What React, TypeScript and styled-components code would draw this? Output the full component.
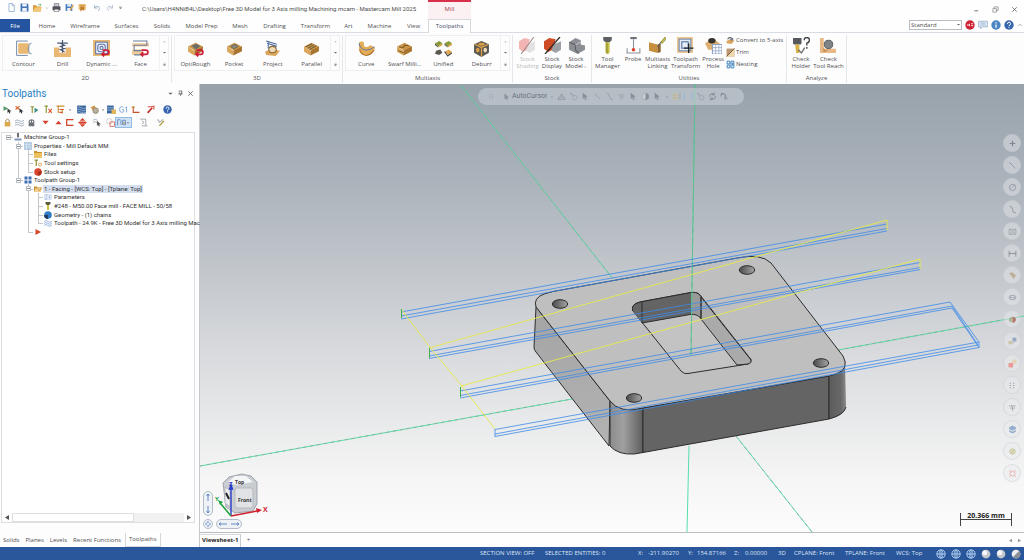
import React from "react";
import styled, { createGlobalStyle } from "styled-components";

const GlobalStyle = createGlobalStyle`
  *, *::before, *::after { box-sizing: border-box; }
  body { margin: 0; background: #fdfdfe; }
  button, select { font: inherit; color: inherit; }
  button { background: none; border: 0; padding: 0; margin: 0; }
  svg { display: block; flex: none; }
`;

const UI = `"Open Sans", "Noto Sans", sans-serif`;
const NARROW = `Roboto, "Liberation Sans", sans-serif`;

/* ---------- icons ---------- */

const tan = "#e9b872";
const block = (
  <>
    <path d="M1 6 8 2.500l7 3.500-5.500 5z" fill="#c9964c" />
    <path d="M1 6v5l6 3.500V10z" fill="#d9a65a" />
    <path d="M7 10v4.500l8-4V6z" fill="#a87430" />
  </>
);
const redLoop = (
  <path d="M9 9.500h4a2 2 0 0 1 0 4H9M10.500 11.500 8.500 13.500l2 2" fill="none" stroke="#cf1f36" strokeWidth="1.6" />
);

const art: Record<string, React.ReactNode> = {
  contour: <><rect x="3" y="3" width="10" height="10" rx="1" fill={tan} /><path d="M12 1H1.500v13.500H12M15.500 3q-3 .5-2.500 3t-1 2q1.500 0 1 2.500t2.500 2.500" fill="none" stroke="#7286a8" strokeWidth=".9" /></>,
  drill: <><path d="M0 7h5v5h6V7h5v9H0z" fill={tan} /><path d="M8 0v12M6 3l4 2-4 1 4 2-4 1 4 2M3 3h10" fill="none" stroke="#4c5a72" strokeWidth="1.1" /></>,
  dynamic: <><rect width="16" height="15" fill={tan} /><rect x="2.500" y="2" width="11" height="11" fill="#eef2fa" stroke="#5d77a8" /><rect x="4.500" y="4" width="7" height="7" rx="2" fill="none" stroke="#5d77a8" /><circle cx="8" cy="7.500" r="1.500" fill="none" stroke="#5d77a8" />{redLoop}</>,
  face: <><path d="M0 3h16v3H0zM0 9h10v5H0z" fill="#f0cd98" /><path d="M1 1h13v4H2v5h7M2 14h7" fill="none" stroke="#6b7d9b" />{redLoop}</>,
  optirough: <>{block}<path d="M5 5.500 9 4l3 2-4 2.500z" fill="#6f6c62" stroke="#4a6a86" strokeWidth=".6" />{redLoop}</>,
  pocket: <>{block}<path d="M4.500 6 8.500 4l3 2-4 2.500z" fill="#8a877c" stroke="#55534c" strokeWidth=".6" /></>,
  project: <><path d="m1 11 5-2.500 9 1.500-4 5-9-1z" fill="#d9a65a" /><path d="M2 1 12 4M3 3l9 3" stroke="#49699c" /><ellipse cx="8" cy="9" rx="3.500" ry="3" fill="#f0dcb8" stroke="#8b6a35" /><path d="M4 2v6" stroke="#49699c" /></>,
  parallel: <>{block}<path d="m2.500 6.500 6-3M4.500 7.800l6-3.300M6 9l6.500-3.500" stroke="#5a4a2c" strokeWidth=".8" /></>,
  curve: <><path d="M1 2.500q0-1 2.500-1t2 2.500q0 3 3 2.500 2-.5 3-1.500l4 1.500v3q-3 5-8 5-6 0-6.500-6z" fill="#e6ac55" /><path d="M1 3q1 6 6.500 6.500Q12 9.500 15.500 6.500" fill="none" stroke="#5b75a4" strokeWidth=".9" /><path d="M1.500 9q1.500 5 6.500 5.500 4-.5 7-5" fill="none" stroke="#a87430" /></>,
  swarf: <>{block}<path d="M3 6.500 7 7l1-2 4 .5M2 10l5 2" fill="none" stroke="#7c5a22" /></>,
  unified: <><path d="m0 3 4-2 3 2-4 3zM9 3l4-2 3 2-4 3z" fill="#8a9a38" /><path d="M0 3v2l3 2V6zM9 3v2l3 2V6zM1 10l4-1 2 3-3 2-4-1z" fill="#5d5a52" /><path d="m3 6 4-3v2L3 7zM12 6l4-3v2l-4 2zM9 11l4-2 3 2-3 3z" fill="#e0a850" /><path d="m9 11 3 4 4-3" fill="none" stroke="#474747" /></>,
  deburr: <><path d="m1 4 7-3 7 3v8l-7 4-7-4z" fill="#5a5852" /><path d="m1.500 4 6.500 3 6.500-3M8 7v8.500" fill="none" stroke="#dba047" strokeWidth="1.200" /><ellipse cx="8" cy="4" rx="3" ry="1.300" fill="#dba047" /><ellipse cx="4.500" cy="9.500" rx="1.700" ry="2.200" fill="#dba047" /><ellipse cx="11.500" cy="9.500" rx="1.700" ry="2.200" fill="#f0dcb8" /></>,
  shading: <><path d="m0 4 5-3 5 1-2 10-4 2-4-3z" fill="#f3b5b3" /><path d="m9 6 6-2v8l-5 3-3-2z" fill="#e2e2e2" /><path d="M14 0 2 16" stroke="#a08888" /></>,
  display: <><path d="m0 4 5-3 6 1-3 10-4 2-4-3z" fill="#cf4b25" /><path d="m9 7 7-3v8l-5 3-4-2z" fill="#9ba0a6" /><path d="M15 0 1 16" stroke="#2c2c2c" strokeWidth="1.200" /></>,
  model: <><path d="m1 5 6-4 5 2v4l4 1v4l-7 4-8-4z" fill="#8b8f94" /><path d="m1 5 6 2.500V12l3 3.500" fill="none" stroke="#5e6266" /><path d="m7 7.500 5-3" stroke="#b9bcc0" /></>,
  tool: <><path d="M4 0h8v3L10 5H6L4 3z" fill="#5c6065" /><path d="M6 5h4v9l-1 2H7l-1-2z" fill="#c6c04a" /><path d="M7 5h1v10H7z" fill="#8c8733" /></>,
  probe: <><path d="M5 0h6v2H5z" fill="#6d7178" /><path d="M8 2v9M2 10.500V15h12v-4.500" fill="none" stroke="#8a9098" /><circle cx="8" cy="12" r="1.700" fill="#d8432a" /></>,
  linking: <><path d="m0 5 8 2v8L0 13z" fill="#c68e3e" /><path d="m8 7 3-1v8l-3 1z" fill="#8a6128" /><path d="m8 9 4-5" stroke="#5c6065" /><path d="m11 5 4-5 1 2-3.500 4z" fill="#c9c250" stroke="#7b7629" strokeWidth=".6" /></>,
  transform: <><rect width="15" height="15" fill="#edc58c" /><rect x="2" y="2" width="11" height="11" fill="#e6edf7" stroke="#6d89b3" /><rect x="4.500" y="4.500" width="6" height="6" fill="none" stroke="#4c6fa3" /><path d="M11 6v9M6.500 10.500h9" stroke="#242424" strokeWidth="1.300" /></>,
  hole: <><path d="m0 6 7-5 7 5-5 6H3z" fill="#ddb072" /><ellipse cx="6.500" cy="3.500" rx="3.500" ry="2.500" fill="#36332c" /><path d="M7 7h9v9H7z" fill="#fff" stroke="#8ba0c4" /><path d="M7 10h9M7 13h9M10 7v9M13 7v9" stroke="#8ba0c4" strokeWidth=".7" /></>,
  holder: <><path d="M0 1h8v5L7 7H1L0 6z" fill="#55585c" /><path d="M2 7h4v8H3z" fill="#d8b145" /><path d="m5 12 3 3 3-5" fill="none" stroke="#6c6f73" strokeWidth="1.200" /><path d="M10.500 3q0-2.500 2.500-2.500t2.500 2.300-2.500 3V8M13 9.500v1.500" fill="none" stroke="#3f4245" strokeWidth="1.300" /></>,
  reach: <><path d="M0 1h3.500v10H15v4H0z" fill="#e8b987" /><path d="M3 9q1 4 5 3l-3 2H3z" fill="#c99458" /><circle cx="8" cy="7" r="4" fill="#7f8387" stroke="#5e6266" /></>,
  convert: <><path d="m1 9 6-3 8 2-5 6-9-1z" fill="#dba65b" /><path d="M3 6q1-4 6-3l4 3" fill="none" stroke="#5d6570" strokeWidth="2" /><circle cx="10" cy="6" r="2.500" fill="#75808c" /></>,
  trim: <><rect x="1" y="1" width="14" height="14" fill="#b99773" /><path d="M1 15 15 1v14z" fill="#efd7ae" /><path d="M1 15 15 1" stroke="#6a4a2b" strokeWidth="1.500" /></>,
  nesting: <><path d="M2 2h5v5H2zM9 2h5v12H9zM2 9h5v5H2z" fill="#eaf3fb" stroke="#2e77b5" strokeWidth="1.500" /><path d="M11 5h2v5h-2z" fill="#2e77b5" /></>,
  newdoc: <path d="M3.500 1h6l3.500 3.500V15h-9.500zM9.500 1v4H13" fill="#fff" stroke="#7da0cc" strokeWidth="1.300" />,
  save: <><path d="M1 1h12l2 2v12H1z" fill="#3f73b5" /><path d="M4 1h8v5H4zM4 9h8v6H4z" fill="#eef3fa" /></>,
  open: <><path d="M0 4h6l1 2h7v9H0z" fill="#d79a3c" /><path d="m3 8 13-1-3 8H0z" fill="#f1c878" /><path d="M9 3h5M12 1l2.500 2L12 5" stroke="#3a9a56" fill="none" /></>,
  print: <><path d="M4 1h8v5H4z" fill="#cfd4da" stroke="#555" /><path d="M1 6h14v7H1z" fill="#4d5258" /><path d="M4 11h8v4H4z" fill="#fff" stroke="#4d5258" /></>,
  saveas: <><path d="M1 2h12v12H1z" fill="#4a7cbc" /><path d="M4 2h7v4H4zM4 9h6v5H4z" fill="#eef3fa" /><path d="m8 12 6-9 2 1.500L10 13z" fill="#e8a43c" /></>,
  zip: <><path d="M1 2h13v10H1z" fill="#efbf72" /><path d="M4 6h7v8l-3-2-4 3z" fill="#c07f2d" /><path d="M3 4h9" stroke="#b37426" /></>,
  undo: <path d="M3 2v6h6M3 8q3-5 8-3 4 3 0 9" fill="none" stroke="#8fa1ba" strokeWidth="1.500" />,
  redo: <path d="M13 2v6H7M13 8q-3-5-8-3-4 3 0 9" fill="none" stroke="#a9b8cb" strokeWidth="1.500" />,
  red: <><circle cx="8" cy="8" r="7.500" fill="#cc2233" /><path d="M3 8h3M7 6v4M10 6h3M10 9h3" stroke="#fff" strokeWidth="1.500" /></>,
  chat: <><path d="M1 2h14v9H7l-3 3v-3H1z" fill="#e2ebf5" stroke="#7f9dc2" /><path d="M4 5h8M4 8h8" stroke="#7f9dc2" /></>,
  info: <><circle cx="8" cy="8" r="7.500" fill="#4a86c2" /><path d="M8 3.500v2M8 7v5.500" stroke="#fff" strokeWidth="2" /></>,
  help: <><circle cx="8" cy="8" r="7.500" fill="#3765ad" /><path d="M5.500 6.500q0-3 2.500-3t2.500 2.300T8 9v1M8 11.500v1.500" fill="none" stroke="#fff" strokeWidth="1.600" /></>,
  selAll: <><path d="m1 2 8 4-8 4z" fill="#4f9a63" /><path d="m8 6 7 5-3 .5 1 3-2 .5-1-3-2 2z" fill="#333" /></>,
  selNone: <><path d="m1 2 7 6M8 2 1 8" stroke="#d9682c" strokeWidth="2.200" /><path d="m8 6 7 5-3 .5 1 3-2 .5-1-3-2 2z" fill="#333" /></>,
  regen: <><path d="M1 3h6M4 3v11" stroke="#8a9431" strokeWidth="2" /><path d="m8 5 7 4-7 5z" fill="#3a8f7d" /></>,
  regenX: <><path d="M1 2h6M4 2v12" stroke="#8a9431" strokeWidth="2" /><path d="m8 7 6 7M14 7l-6 7" stroke="#d9582c" strokeWidth="2" /></>,
  regenAll: <><path d="M1 2h14M4 2v12M11 7v8" stroke="#c99031" strokeWidth="2" /><path d="M6 8h8M6 13h6" stroke="#d9582c" strokeWidth="2" /></>,
  backplot: <><path d="M0 1h16v14H0z" fill="#3a659e" /><path d="M0 5q4-3 8 0t8 0M0 9q4-3 8 0t8 0M0 13q4-3 8 0t8 0" stroke="#cfe0f5" fill="none" /></>,
  verify: <><path d="m1 4 7-3 3 5-5 4z" fill="#d59a45" /><circle cx="10" cy="10" r="5" fill="#b9b19d" stroke="#786c52" /></>,
  post: <><path d="M0 1h12v14H0z" fill="#3a659e" /><path d="M0 5h12M0 9h12" stroke="#d6e4f5" /><path d="M8 8h8v8H8z" fill="#e2b35d" /></>,
  g1: <path d="M8 4.500q-1-1.500-3.500-1.500Q1 3 1 8t4 5q3 0 3.500-1.500V8.500H5M11 5.500 13.500 3v10" fill="none" stroke="#6b98cd" strokeWidth="1.400" />,
  feed: <><path d="M4 2v11h11" fill="none" stroke="#c4522f" strokeWidth="2" /><path d="M1 4h6" stroke="#c99031" strokeWidth="2" /></>,
  wand: <><path d="m3 14 8-9" stroke="#c22f2a" strokeWidth="3" /><path d="M3 3h6l5-1v6" fill="none" stroke="#d95448" strokeWidth="2" /></>,
  lock: <><path d="M3 7h10v8H3z" fill="#d9a94c" /><path d="M5 7V4q3-4 6 0v3" fill="none" stroke="#98763a" strokeWidth="1.500" /></>,
  tilde: <path d="M0 5q4-3 8 0t8-1M0 9q4-3 8 0t8-1M0 13q4-3 8 0t8-1" fill="none" stroke="#8e9bab" strokeWidth="1.300" />,
  ghost: <><path d="M3 15V5q1-3 5-3t5 3v10l-2-1-1.500 1L8 14l-1.500 1L5 14z" fill="#6e7276" /><path d="M5 5h2v3H5zM9 5h2v3H9z" fill="#fff" /></>,
  down: <path d="M1 4h14l-7 8z" fill="#d6402b" />,
  up: <path d="M1 12h14L8 4z" fill="#d6402b" />,
  bracket: <path d="M15 3H3v10h12" fill="none" stroke="#d6402b" strokeWidth="2.200" />,
  updown: <path d="m8 0 5 5H3zM8 16l5-5H3zM0 8l3-2h10l3 2-3 2H3z" fill="#d6402b" />,
  cursorW: <><path d="M0 4q4-3 8 0M0 8q4-3 7 0" fill="none" stroke="#8e9bab" strokeWidth="1.300" /><path d="m7 5 7 6-3 .5 1 3-2 .5-1-3-2 2z" fill="#555" /></>,
  shapes: <><circle cx="6" cy="6" r="5" fill="none" stroke="#b9b0ae" /><path d="M7 7h8v8H7z" fill="none" stroke="#d9705f" strokeWidth="1.600" /></>,
  boxed: <><path d="M1 3v10M1 3h5M7 4v8M10 4h5v8h-5z" fill="none" stroke="#5f86b5" strokeWidth="1.500" /><path d="M11.500 7h2v3h-2z" fill="#c77a3a" /></>,
  sheet: <path d="M2 2h10v12H5M12 14h3M5 5l4 3-4 3" fill="none" stroke="#9a9ea4" strokeWidth="1.500" />,
  edit: <><path d="M2 3q4 0 4 5l7-6" fill="none" stroke="#8a8e94" strokeWidth="1.500" /><path d="m6 14 8-9" stroke="#b1a04a" strokeWidth="2.500" /></>,
  machine: <><path d="M6 0h4v7l-2 3-2-3z" fill="#6a7077" /><path d="M1 11h14v4H1z" fill="#7e97b8" /></>,
  props: <><path d="M1 1h14v14H1z" fill="#b9cfe6" stroke="#8aa9cc" /><path d="M5 1v14M1 5h14M1 10h14" stroke="#dfeaf5" /></>,
  folder: <><path d="M0 2h6l1 2h9v11H0z" fill="#c9922d" /><path d="M0 6h16v9H0z" fill="#edc25e" /></>,
  settings: <><path d="M1 2h7M4.500 2v12" stroke="#98913a" strokeWidth="2.500" /><circle cx="12" cy="11" r="3" fill="none" stroke="#d08f3b" strokeWidth="1.600" /></>,
  stock: <><circle cx="8" cy="8" r="7.500" fill="#d8452a" /><path d="M8 8v7.500A7.500 7.500 0 0 0 15 6z" fill="#a8301a" /></>,
  group: <path d="M1 1h6v6H1zM9 1h6v6H9zM1 9h6v6H1zM9 9h6v6H9z" fill="#3b6cb3" />,
  opened: <><path d="M0 3h6l1 2h6v9H0z" fill="#c9922d" /><path d="m3 7 13-1-3 8H0z" fill="#f2d394" /><path d="m8 9 3 3 4-8" fill="none" stroke="#c7852c" strokeWidth="1.500" /></>,
  params: <path d="M0 4h16M0 8h16M0 12h16M5 2v4M11 6v4M4 10v4" stroke="#88a4d4" strokeWidth="1.200" />,
  mill: <><path d="M3 0h10v4l-3 2H6L3 4z" fill="#5a5c3a" /><path d="M6 6h4v10H6z" fill="#d1c33f" /></>,
  geometry: <><circle cx="8" cy="8" r="7.500" fill="#2f7cc5" /><path d="M0 8 8 8 8 16A8 8 0 0 1 0 8z" fill="#223d63" /></>,
  path: <path d="M0 5q4-4 8 0t8-1M0 9q4-4 8 0t8-1M0 13q4-4 8 0t8-1" fill="none" stroke="#7fa3d6" strokeWidth="1.500" />,
  play: <path d="m3 2 11 6-11 6z" fill="#d8452a" />,
  arrow: <path d="m3 1 9 8-4 .5 2 4-2 1-2-4-3 2z" fill="#5d656f" />,
  bench: <path d="M1 13h14M3 13V9h10v4M8 9V4M5 5h6" fill="none" stroke="#69727d" strokeWidth="1.500" />,
  point: <><path d="m2 2 5 4" stroke="#7a838d" strokeWidth="2" /><circle cx="10" cy="10" r="4" fill="none" stroke="#8b8f93" strokeWidth="1.500" /></>,
  half: <><circle cx="8" cy="8" r="6" fill="#dde1e5" stroke="#7b858f" /><path d="M8 2a6 6 0 0 1 0 12z" fill="#5d6065" /></>,
  grid: <><path d="M1 2h10v12H1z" fill="#d3c48e" /><path d="M1 6h10M1 10h10M5 2v12" stroke="#aaa58d" /><path d="M14 2v12" stroke="#5c636b" strokeWidth="1.500" strokeDasharray="2 2" /></>,
  bar: <path d="M1 0v16M14 0v16" stroke="#7db4ec" strokeWidth="1.500" />,
  spin: <path d="M3 9a5 5 0 0 1 8-5M13 7a5 5 0 0 1-8 5M11 1v4H7M5 15v-4h4" fill="none" stroke="#4d5660" strokeWidth="1.700" />,
  back: <path d="M2 3h5M2 3v5M2 3q8-1 9 5M9 8l5 5M9 8v6" fill="none" stroke="#4d5660" strokeWidth="1.700" />,
  plus: <path d="M8 3v10M3 8h10" stroke="#68707a" strokeWidth="2.200" />,
  line: <path d="m2 3 5 3M6 6l7 7" stroke="#7b838c" strokeWidth="1.500" />,
  arc: <><circle cx="8" cy="8" r="5.500" fill="none" stroke="#7b838c" strokeWidth="1.500" /><path d="m5 10 8-8" stroke="#7b838c" /></>,
  spline: <path d="M3 2q5 0 5 6t6 6" fill="none" stroke="#7b838c" strokeWidth="1.700" />,
  mail: <path d="M2 4h12v9H2zM2 4l12 9M14 4 2 13" fill="none" stroke="#868e97" strokeWidth="1.300" />,
  dim: <path d="M2 3v11M14 3v11M2 8h12M4 6 2 8l2 2M12 6l2 2-2 2" fill="none" stroke="#727b85" strokeWidth="1.500" />,
  solid: <path d="m2 4 6-2 6 6-4 6z" fill="#b9a385" />,
  mesh: <><ellipse cx="8" cy="8" rx="6" ry="4" fill="none" stroke="#8b939c" strokeWidth="1.500" /><path d="M2 8h12M5 5v7M11 5v7" stroke="#8b939c" /></>,
  color: <><path d="m2 6 5-3v10l-5-2z" fill="#9ba779" /><path d="M8 3q6 0 6 5t-6 6z" fill="#a95743" /></>,
  level: <><path d="M8 1h7v7H8z" fill="#8194b7" /><path d="M1 7h6v6H1z" fill="#c7bd92" /><path d="M7 10h4" stroke="#888" /></>,
  level2: <><path d="M8 1h7v7H8z" fill="#e6cba0" /><path d="M1 7h8v8H1z" fill="#ec8478" /></>,
  dots: <path d="M4 3v10M10 3v10" stroke="#777f88" strokeWidth="2" strokeDasharray="2 2" />,
  cluster: <path d="M2 5h12M4 9h9M8 4v10" stroke="#878e96" strokeWidth="2" strokeDasharray="2 1" />,
  layers: <path d="m8 1 6 3v3l-6 3-6-3V4zM2 9l6 3 6-3v3l-6 3-6-3z" fill="#7a9cc7" />,
  hatch: <><circle cx="8" cy="8" r="5" fill="#d8d9ab" stroke="#a8a878" /><path d="m5 11 6-6" stroke="#8d8d60" /></>,
  target: <><circle cx="8" cy="8" r="4.500" fill="none" stroke="#e79a95" strokeWidth="1.500" /><path d="m2 2 4 4M14 2l-4 4M2 14l3-3M14 14l-3-3" stroke="#e79a95" strokeWidth="1.500" /></>,
  globe: <><circle cx="8" cy="8" r="6.500" fill="none" stroke="#b5d4f5" strokeWidth="1.500" /><path d="M1 8h14M8 1v14" stroke="#b5d4f5" strokeWidth="1.500" /><ellipse cx="8" cy="8" rx="3" ry="6.500" fill="none" stroke="#b5d4f5" /></>,
  ball: <><circle cx="8" cy="8" r="7" fill="#c4c8cd" /><circle cx="6" cy="6" r="4" fill="#f6f7f8" /></>,
  ballHalf: <><circle cx="8" cy="8" r="7" fill="#eceef0" /><path d="M13 3A7 7 0 0 1 3 13z" fill="#8a8f96" /></>,
  min: <path d="M3 11h9" stroke="#555" strokeWidth="1.800" />,
  restore: <path d="M2 6h8v8H2zM5 6V2h9v8h-4" fill="none" stroke="#666" strokeWidth="1.300" />,
  close: <path d="m3 3 10 10M13 3 3 13" stroke="#555" strokeWidth="1.800" />,
  pin: <path d="M5 2h6v7H5zM3 9h10M8 9v5M10 2v7" fill="none" stroke="#666" strokeWidth="1.500" />,
  caret: <path d="M3 6h10l-5 5z" fill="#666" />,
  caretUp: <path d="M4 10h8L8 6z" fill="#aaa" />,
  more: <path d="M4 4h8M4 8h8l-4 5z" fill="#777" stroke="#777" />,
  chevron: <path d="m3 6 5 4 5-4" fill="none" stroke="#777" strokeWidth="1.500" />,
  chevUp: <path d="m3 10 5-4 5 4" fill="none" stroke="#888" strokeWidth="1.500" />,
};

const Icon = ({ name, size = 10 }: { name: string; size?: number }) => (
  <svg width={size} height={size} viewBox="0 0 16 16" aria-hidden="true">{art[name]}</svg>
);

/* ---------- shell ---------- */

const Shell = styled.div`
  display: flex;
  flex-direction: column;
  min-height: 100vh;
  font-family: ${UI};
  font-size: 6px;
  line-height: 7px;
  color: #505050;
  overflow: hidden;
`;

const TitleBar = styled.header`
  display: flex;
  height: 19px;
  background: #fefefe;
`;
const QuickBar = styled.div`
  display: flex;
  align-items: center;
  flex: 0 0 142px;
  height: 15px;
  padding-left: 5px;
`;
const QuickButton = styled.button<{ $w?: number }>`
  display: flex;
  align-items: center;
  justify-content: center;
  width: ${(p) => p.$w ?? 13}px;
  height: 13px;
`;
const DocTitle = styled.h1`
  margin: 0;
  flex: 0 0 286px;
  font-family: ${NARROW};
  font-size: 6px;
  font-weight: 400;
  line-height: 18px;
  white-space: nowrap;
`;
const ContextTab = styled.div`
  flex: 0 0 43px;
  height: 19px;
  border-top: 2px solid #d8304a;
  background: #fbf1f2;
  color: #a33a4a;
  text-align: center;
  line-height: 15px;
`;
const WindowButtons = styled.div`
  display: flex;
  align-items: center;
  gap: 12px;
  margin-left: auto;
  padding-right: 6px;
`;

const TabRow = styled.nav`
  display: flex;
  height: 14px;
  border-bottom: 1px solid #d9dce2;
  background: #fefefe;
`;
const Tab = styled.button<{ $w: number; $kind?: "file" | "active" }>`
  flex: 0 0 ${(p) => p.$w}px;
  height: ${(p) => (p.$kind === "active" ? 14 : 13)}px;
  line-height: 12px;
  white-space: nowrap;
  ${(p) => p.$kind === "file" && "background:#2453a0;color:#fff;margin-right:1px;"}
  ${(p) => p.$kind === "active" && "background:#fefefe;border:1px solid #d6d8de;border-bottom:0;color:#46506a;line-height:11px;"}
`;
const TabTools = styled.div`
  display: flex;
  align-items: center;
  gap: 3px;
  height: 11px;
  margin-left: auto;
  padding-right: 1px;
`;
const StyleBox = styled.label`
  position: relative;
  display: flex;
  align-items: center;
  width: 53px;
  svg { position: absolute; right: 1px; pointer-events: none; }
`;
const StyleSelect = styled.select`
  appearance: none;
  width: 100%;
  height: 10px;
  padding: 0 1px;
  border: 1px solid #b9bcc2;
  border-radius: 0;
  background: #fff;
  line-height: 8px;
`;

/* ---------- ribbon ---------- */

const Ribbon = styled.section`
  display: flex;
  height: 51px;
  padding-top: 2px;
  background: #fdfdfe;
`;
const Group = styled.div<{ $w: number }>`
  display: flex;
  flex-direction: column;
  flex: 0 0 ${(p) => p.$w}px;
  height: 48px;
  border-right: 1px solid #e6e7ea;
`;
const GroupBody = styled.div`
  display: flex;
  flex: 1;
  padding: 0 2px;
`;
const GroupLabel = styled.div`
  text-align: center;
  line-height: 10px;
`;
const Gallery = styled.div`
  display: flex;
  flex: 1;
  height: 36px;
  border: 1px solid #eeeff1;
`;
const GalleryItem = styled.button`
  display: flex;
  flex-direction: column;
  align-items: center;
  gap: 4px;
  flex: 1 1 0;
  min-width: 0;
  padding: 4px 0 0 2px;
  white-space: nowrap;
`;
const GalleryScroll = styled.div`
  display: flex;
  flex-direction: column;
  justify-content: space-around;
  align-items: center;
  width: 9px;
  border-left: 1px solid #f1f1f3;
`;
const BigButton = styled.button<{ $w: number; $off?: boolean }>`
  display: flex;
  flex-direction: column;
  align-items: center;
  gap: 2px;
  flex: 0 0 ${(p) => p.$w}px;
  padding-top: 2px;
  white-space: nowrap;
  color: ${(p) => (p.$off ? "#bdbdbd" : "inherit")};
`;
const TwoLine = styled.span`
  display: flex;
  flex-direction: column;
  align-items: center;
`;
const WithCaret = styled.span`
  display: flex;
  align-items: center;
`;
const SmallStack = styled.div`
  display: flex;
  flex-direction: column;
  gap: 2px;
  padding-left: 1px;
`;
const SmallButton = styled.button`
  display: flex;
  align-items: center;
  gap: 1px;
  height: 10px;
  white-space: nowrap;
`;

/* ---------- side panel ---------- */

const Main = styled.main`
  display: flex;
  flex: 1;
  min-height: 0;
`;
const Side = styled.aside`
  display: flex;
  flex-direction: column;
  flex: 0 0 200px;
  padding-right: 4px;
  background: #fdfdfe;
  border-right: 1px solid #c5c9ce;
`;
const PanelHead = styled.div`
  display: flex;
  align-items: center;
  gap: 3px;
  height: 19px;
  padding: 0 1px 0 2px;
`;
const PanelTitle = styled.h2`
  margin: 0 auto 0 0;
  font-family: ${NARROW};
  font-size: 10px;
  line-height: 12px;
  font-weight: 400;
  color: #2a7fc4;
`;
const ToolRow = styled.div`
  display: flex;
  align-items: center;
  height: 13px;
  padding-left: 1px;
`;
const ToolBtn = styled.button<{ $w?: number; $on?: boolean }>`
  display: flex;
  align-items: center;
  justify-content: center;
  flex: 0 0 ${(p) => p.$w ?? 12}px;
  height: 11px;
  ${(p) => p.$on && "background:#cfe1f5;border:1px solid #92bbe4;"}
`;
const TreeBox = styled.div`
  display: flex;
  flex-direction: column;
  justify-content: space-between;
  flex: 1;
  margin: 3px 0 10px 1px;
  border: 1px solid #dcdee2;
  background: #fff;
`;
const TreeRows = styled.div`
  display: grid;
  grid-auto-rows: 1fr;
  height: 103px;
  padding-left: 1px;
  font-family: ${NARROW};
  color: #303030;
`;
const TreeRow = styled.div`
  display: flex;
  align-items: stretch;
  min-width: 0;
  white-space: nowrap;
`;
const Guide = styled.span<{ $t: string }>`
  position: relative;
  flex: 0 0 10px;
  &::before {
    content: "";
    position: absolute;
    left: 5px;
    top: 0;
    bottom: ${(p) => (p.$t === "L" ? "50%" : "0")};
    border-left: ${(p) => ("TL|".includes(p.$t) ? "1px solid #c4c7cb" : "0")};
  }
  &::after {
    content: "";
    position: absolute;
    left: 5px;
    right: 0;
    top: 50%;
    border-top: ${(p) => ("TLR".includes(p.$t) ? "1px solid #c4c7cb" : "0")};
  }
`;
const Expander = styled.i`
  position: absolute;
  z-index: 1;
  left: 3px;
  top: 2px;
  width: 5px;
  height: 5px;
  border: 1px solid #b9bfc6;
  background: linear-gradient(#fff 33%, #888 33%, #888 66%, #fff 66%);
`;
const NodeIcon = styled.span`
  display: flex;
  align-items: center;
  justify-content: center;
  flex: 0 0 10px;
`;
const NodeText = styled.span<{ $sel?: boolean }>`
  align-self: center;
  padding: 0 1px;
  line-height: 8px;
  background: ${(p) => (p.$sel ? "#d6dff0" : "transparent")};
`;
const ScrollBar = styled.div`
  display: flex;
  align-items: center;
  height: 9px;
  background: #f1f1f1;
`;
const ScrollTrack = styled.div`
  flex: 1;
`;
const ScrollArrow = styled.button`
  display: flex;
  align-items: center;
  justify-content: center;
  flex: 0 0 10px;
  height: 9px;
  background: #fdfdfd;
`;
const ScrollThumb = styled.div`
  width: 71%;
  height: 9px;
  border: 1px solid #dddfe2;
  background: #fff;
`;
const BottomTabs = styled.nav`
  display: flex;
  align-items: center;
  height: 14px;
  padding-left: 3px;
  margin-right: auto;
  gap: 6px;
`;
const BottomTab = styled.button<{ $on?: boolean }>`
  height: 14px;
  white-space: nowrap;
  ${(p) => p.$on && "padding:0 3px;margin-left:-2px;border:1px solid #d5d7db;border-top:0;background:#fff;"}
`;

/* ---------- graphics window ---------- */

const Work = styled.section`
  display: flex;
  flex-direction: column;
  flex: 1;
  min-width: 0;
`;
const Canvas = styled.div`
  position: relative;
  flex: 1;
  min-height: 0;
  background: linear-gradient(#97a2ab 0%, #abb3bb 22%, #c6cacf 45%, #d8dadd 60%, #e8e9ea 75%, #f6f6f6 89%, #fcfcfc 100%);
  overflow: hidden;
`;
const Scene = styled.svg`
  position: absolute;
  inset: 0;
  width: 100%;
  height: 100%;
`;
const SelectionBar = styled.div`
  position: absolute;
  left: 50%;
  top: 4px;
  display: flex;
  align-items: center;
  gap: 3px;
  width: 266px;
  height: 17px;
  margin-left: -134px;
  padding: 0 10px;
  border-radius: 9px;
  background: rgba(200, 206, 214, 0.6);
  color: #6b737d;
  svg { opacity: 0.5; }
`;
const AutoCursor = styled.button`
  display: flex;
  align-items: center;
  gap: 1px;
  margin-left: 5px;
  font-family: ${NARROW};
  font-size: 7px;
`;
const SideBar = styled.div`
  position: absolute;
  right: 3px;
  top: 50px;
  display: flex;
  flex-direction: column;
  gap: 4px;
`;
const RoundButton = styled.button`
  display: flex;
  align-items: center;
  justify-content: center;
  width: 18px;
  height: 18px;
  border: 1px solid rgba(190, 196, 203, 0.4);
  border-radius: 9px;
  background: rgba(232, 235, 238, 0.45);
  svg { opacity: 0.75; }
`;
const SheetRow = styled.div`
  display: flex;
  align-items: center;
  height: 15px;
  border-top: 1px solid #b9bdc1;
  background: #fefefe;
`;
const SheetTab = styled.button`
  height: 13px;
  padding: 0 2px;
  border-right: 1px solid #c8cbd0;
  border-top: 1px solid #d5d8dc;
  font-weight: 700;
  color: #222;
`;
const AddSheet = styled.button`
  width: 14px;
  line-height: 8px;
`;
const SheetArrows = styled.div`
  display: flex;
  gap: 6px;
  margin-left: auto;
  padding-right: 3px;
`;

const StatusBar = styled.footer`
  display: flex;
  align-items: center;
  justify-content: flex-end;
  height: 13px;
  padding-right: 3px;
  background: #2a569b;
  color: #dfe8f6;
`;
const Stat = styled.span<{ $w: number }>`
  flex: 0 0 ${(p) => p.$w}px;
  white-space: nowrap;
`;
const StatIcons = styled.div`
  display: flex;
  gap: 5px;
`;

/* ---------- data ---------- */

const tabs: [string, number][] = [
  ["Home", 32], ["Wireframe", 44], ["Surfaces", 39], ["Solids", 32], ["Model Prep", 47], ["Mesh", 30],
  ["Drafting", 39], ["Transform", 43], ["Art", 23], ["Machine", 39], ["View", 29],
];

const galleries: { label: string; w: number; items: [string, string][] }[] = [
  { label: "2D", w: 172, items: [["contour", "Contour"], ["drill", "Drill"], ["dynamic", "Dynamic ..."], ["face", "Face"]] },
  { label: "3D", w: 171, items: [["optirough", "OptiRough"], ["pocket", "Pocket"], ["project", "Project"], ["parallel", "Parallel"]] },
  { label: "Multiaxis", w: 170, items: [["curve", "Curve"], ["swarf", "Swarf Milli..."], ["unified", "Unified"], ["deburr", "Deburr"]] },
];

type Node = { g: string; icon: string; text: string; open?: boolean; sel?: boolean };
const tree: Node[] = [
  { g: "R", icon: "machine", text: "Machine Group-1", open: true },
  { g: " T", icon: "props", text: "Properties - Mill Default MM", open: true },
  { g: " |T", icon: "folder", text: "Files" },
  { g: " |T", icon: "settings", text: "Tool settings" },
  { g: " |L", icon: "stock", text: "Stock setup" },
  { g: " L", icon: "group", text: "Toolpath Group-1", open: true },
  { g: "  T", icon: "opened", text: "1 - Facing - [WCS: Top] - [Tplane: Top]", open: true, sel: true },
  { g: "  |T", icon: "params", text: "Parameters" },
  { g: "  |T", icon: "mill", text: "#248 - M50.00 Face mill - FACE MILL - 50/58" },
  { g: "  |T", icon: "geometry", text: "Geometry - (1) chains" },
  { g: "  |L", icon: "path", text: "Toolpath - 24.9K - Free 3D Model for 3 Axis milling Mac" },
  { g: "  L", icon: "play", text: "" },
];

const rowOne: [string, number][] = [
  ["selAll", 12], ["selNone", 12], ["regen", 18], ["regenX", 10], ["regenAll", 15], ["caret", 4],
  ["backplot", 18], ["verify", 9], ["caret", 7], ["post", 11], ["g1", 12], ["feed", 12], ["wand", 19], ["help", 14],
];
const rowTwo: [string, number][] = [
  ["lock", 12], ["tilde", 12], ["ghost", 12], ["down", 16], ["up", 10], ["bracket", 13], ["updown", 12],
  ["cursorW", 18], ["shapes", 9],
];

const roundTools = ["plus", "line", "arc", "spline", "mail", "dim", "solid", "mesh", "color", "level", "level2", "dots", "cluster", "layers", "hatch", "target"];
const selTools = ["caret", "bench", "point", "arrow", "line", "spline", "cluster", "arrow", "half", "arrow", "caret", "grid", "bar", "point", "spin", "back"];

const holes: [number, number][] = [[560, 304], [634, 398], [747, 270], [821, 363]];

const Drawing = () => (
  <Scene viewBox="200 84 824 448" preserveAspectRatio="xMidYMid slice" fill="none" role="img" aria-label="Machined plate with facing toolpath">
    <defs>
      <linearGradient id="corner" x1="610" x2="643" y1="0" y2="0" gradientUnits="userSpaceOnUse">
        <stop offset="0" stopColor="#8c8c8c" /><stop offset=".4" stopColor="#a0a0a0" /><stop offset="1" stopColor="#5d5d5d" />
      </linearGradient>
      <linearGradient id="right" x1="829" x2="846" y1="0" y2="0" gradientUnits="userSpaceOnUse">
        <stop offset="0" stopColor="#5c5c5c" /><stop offset=".7" stopColor="#686868" /><stop offset="1" stopColor="#8a8a8a" />
      </linearGradient>
      <linearGradient id="hole" x1="0" x2="1">
        <stop offset="0" stopColor="#4a4a4a" /><stop offset="1" stopColor="#a5a5a5" />
      </linearGradient>
      <linearGradient id="sidewall" x1="0" x2="0" y1="0" y2="1">
        <stop offset="0" stopColor="#a4a4a4" /><stop offset="1" stopColor="#b3b3b3" />
      </linearGradient>
    </defs>
    <g stroke="#43dba0" strokeWidth=".9">
      <path d="M460 84 613 279M736 436 812 532M689 446 687 532M200 466 572 399M838 350l186-34" />
      <path d="M460 84 613 279M736 436 812 532M200 466 572 399M838 350l186-34" stroke="#8fae98" strokeDasharray="3 4" />
    </g>
    <g stroke="#2c2c2c" strokeWidth="1" strokeLinejoin="round">
      <path d="M536 307 534 347q0 3 2 5L609 446 610 401z" fill="url(#sidewall)" />
      <path d="M610 401V446q8 9 24 8l9-1.500V408z" fill="url(#corner)" />
      <path d="M643 408v44.500L829 419V376z" fill="#646464" />
      <path d="M829 376v43q17-4 17-13l-1-43z" fill="url(#right)" stroke="none" />
      <path d="M829 376v43q15-4 17-12" />
      <path d="M536 307q-3-9 8-13l9-2.500L737 258q24-5 34 5l72 93q7 13-7 18l-7 2L643 408q-23 6-33-7z" fill="#bfbfbf" />
      <path d="M633 311q-2-5 3-7.500l4-1.500 51-9.500q8-1 11 5l49 62q1 3-3 4.500L688 373.500q-4 1-7-2.500z" fill="#c3c3c3" />
      <path d="M633 311q-2-5 3-7.500l4-1.500 51-9.500q7-1 10 4v22q-4-5-11-4L642 323z" fill="#646464" stroke="none" />
      <path d="M691 292.500q7-1 10 4v22q-3-4-10-4z" fill="#999" stroke="none" />
      <path d="m701 297 50 63q1 3-3 4l-11 1-36-46z" fill="#aaa" />
      <path d="M642 302v21L690 314.500q7-1 11 4M633 311q-2-5 3-7.500l4-1.500 51-9.500q7-1 10 4v22" />
      {holes.map(([x, y]) => (
        <ellipse key={x} cx={x} cy={y} rx="7.700" ry="4.300" fill="url(#hole)" />
      ))}
    </g>
    <path d="M695 84 691 355" stroke="#3fce8c" strokeWidth=".9" />
    <path d="M695 84 691 355" stroke="#6fb592" strokeWidth=".9" strokeDasharray="6 5" />
    <g stroke="#3d8ae8" strokeWidth=".8">
      <path d="m401 312 486-88M401 316l486-87.500M401 319l486-88" />
      <path d="m429 351.500 491-89M429 356l491-88.500M429 358.500l491-89" />
      <path d="m460 391 490-89 29 40-484 87.500M460 395.500 952 306l26 39-483 89M460 398l492-90 27 39.500L495 436.500M495 429v8M979 342v6" />
    </g>
    <g stroke="#e6ea48" strokeWidth=".9">
      <path d="m401 309 28 37 32 39 34 44M429 348l458-128v10M461 386l459-127v10" />
    </g>
    <path d="M401.500 309v9M429.500 348v10M460.500 387v10" stroke="#3cae4c" />
    <g>
      <path d="m223 483 6-6 13-3 9 2 6 6v22l-4 7-18 2-9-6z" fill="#c9ccd1" stroke="#a0a5ad" />
      <path d="m228 482 7-6h11l7 6-18 3z" fill="#f4f5f6" />
      <rect x="235" y="488" width="18" height="20" rx="2" fill="#e0e2e5" stroke="#b5b9bf" />
      <path d="m225 487 5 3v17l-5-4z" fill="#eceef0" stroke="#b5b9bf" />
      <path d="m226 493 3 6" stroke="#222" strokeWidth="2" />
      <path d="M231 516V487M229.500 489l1.500-4 1.500 4z" stroke="#2a3fc8" strokeWidth="1.400" fill="#2a3fc8" />
      <path d="m231 516-10-12" stroke="#21a13c" strokeWidth="1.600" />
      <path d="m218 500 5 2-3 3z" fill="#21a13c" />
      <path d="m231 516 26-5" stroke="#cf2130" strokeWidth="1.400" />
      <path d="m262 510-6-2 1 5z" fill="#cf2130" />
      <g fontFamily="Open Sans, sans-serif" fontSize="6" fontWeight="700">
        <text x="238" y="502" fill="#333" fontSize="5">Front</text>
        <text x="235" y="484" fill="#333" fontSize="5">Top</text>
        <text x="229" y="486" fill="#2a3fc8">Z</text>
        <text x="215" y="501" fill="#21a13c">Y</text>
        <text x="263" y="512" fill="#cf2130" fontSize="7">X</text>
      </g>
      <g fill="#eef1f5" stroke="#b3bcc8">
        <rect x="203.500" y="491.500" width="9" height="24" rx="4.500" />
        <rect x="216.500" y="519.500" width="25" height="9" rx="4.500" />
        <circle cx="208" cy="524" r="4.500" />
      </g>
      <path d="M208 494v7M208 506v7M206.500 496l1.500-2 1.500 2M206.500 511l1.500 2 1.500-2M219 524h8M231 524h8M221 522.500l-2 1.500 2 1.500M237 522.500l2 1.500-2 1.500M206 525a2.500 2.500 0 0 1 3-3M210 523a2.500 2.500 0 0 1-3 3" stroke="#5580c0" strokeWidth=".9" />
    </g>
    <path d="M960.500 513v13M1011.500 513v13M960 519.500h51" stroke="#444" />
    <text x="986" y="518" textAnchor="middle" fontFamily="Open Sans, sans-serif" fontSize="7" fontWeight="700" fill="#222">20.366 mm</text>
  </Scene>
);

const Big = ({ icon, a, b, w, off, caret }: { icon: string; a: string; b?: string; w: number; off?: boolean; caret?: boolean }) => (
  <BigButton $w={w} $off={off} disabled={off}>
    <Icon name={icon} size={17} />
    <TwoLine>
      <span>{a}</span>
      {b && <WithCaret>{b}{caret && <Icon name="chevron" size={4} />}</WithCaret>}
    </TwoLine>
  </BigButton>
);

export default function App() {
  return (
    <Shell>
      <GlobalStyle />
      <TitleBar>
        <QuickBar>
          {["newdoc", "save", "open"].map((n) => <QuickButton key={n} aria-label={n}><Icon name={n} size={9} /></QuickButton>)}
          <QuickButton $w={6} aria-label="open menu"><Icon name="chevron" size={4} /></QuickButton>
          {["print", "saveas", "zip"].map((n) => <QuickButton key={n} aria-label={n}><Icon name={n} size={9} /></QuickButton>)}
          <QuickButton $w={16} aria-label="undo"><Icon name="undo" size={8} /></QuickButton>
          <QuickButton $w={10} aria-label="redo"><Icon name="redo" size={8} /></QuickButton>
          <QuickButton $w={10} aria-label="customize"><Icon name="more" size={5} /></QuickButton>
        </QuickBar>
        <DocTitle>C:\Users\H4NNiB4L\Desktop\Free 3D Model for 3 Axis milling Machining.mcam - Mastercam Mill 2025</DocTitle>
        <ContextTab>Mill</ContextTab>
        <WindowButtons>
          {["min", "restore", "close"].map((n) => <button key={n} aria-label={n}><Icon name={n} size={7} /></button>)}
        </WindowButtons>
      </TitleBar>

      <TabRow>
        <Tab $w={30} $kind="file">File</Tab>
        {tabs.map(([t, w]) => <Tab key={t} $w={w}>{t}</Tab>)}
        <Tab $w={43} $kind="active">Toolpaths</Tab>
        <TabTools>
          <StyleBox>
            <StyleSelect aria-label="Attribute style"><option>Standard</option></StyleSelect>
            <Icon name="caret" size={5} />
          </StyleBox>
          {["red", "chat", "info", "help"].map((n) => <button key={n} aria-label={n}><Icon name={n} size={10} /></button>)}
          <button aria-label="Collapse ribbon"><Icon name="chevUp" size={6} /></button>
        </TabTools>
      </TabRow>

      <Ribbon>
        {galleries.map((g) => (
          <Group key={g.label} $w={g.w}>
            <GroupBody>
              <Gallery>
                {g.items.map(([i, t]) => <GalleryItem key={t}><Icon name={i} size={17} />{t}</GalleryItem>)}
                <GalleryScroll>
                  <Icon name="caretUp" size={5} />
                  <Icon name="caret" size={5} />
                  <Icon name="more" size={5} />
                </GalleryScroll>
              </Gallery>
            </GroupBody>
            <GroupLabel>{g.label}</GroupLabel>
          </Group>
        ))}
        <Group $w={79}>
          <GroupBody>
            <Big icon="shading" a="Stock" b="Shading" w={25} off />
            <Big icon="display" a="Stock" b="Display" w={24} />
            <Big icon="model" a="Stock" b="Model" w={24} caret />
          </GroupBody>
          <GroupLabel>Stock</GroupLabel>
        </Group>
        <Group $w={195}>
          <GroupBody>
            <Big icon="tool" a="Tool" b="Manager" w={27} />
            <Big icon="probe" a="Probe" w={24} />
            <Big icon="linking" a="Multiaxis" b="Linking" w={25} />
            <Big icon="transform" a="Toolpath" b="Transform" w={31} />
            <Big icon="hole" a="Process" b="Hole" w={24} />
            <SmallStack>
              <SmallButton><Icon name="convert" size={9} />Convert to 5-axis</SmallButton>
              <SmallButton><Icon name="trim" size={9} />Trim</SmallButton>
              <SmallButton><Icon name="nesting" size={9} />Nesting</SmallButton>
            </SmallStack>
          </GroupBody>
          <GroupLabel>Utilities</GroupLabel>
        </Group>
        <Group $w={60}>
          <GroupBody>
            <Big icon="holder" a="Check" b="Holder" w={24} />
            <Big icon="reach" a="Check" b="Tool Reach" w={31} />
          </GroupBody>
          <GroupLabel>Analyze</GroupLabel>
        </Group>
      </Ribbon>

      <Main>
        <Side>
          <PanelHead>
            <PanelTitle>Toolpaths</PanelTitle>
            {["caret", "pin", "close"].map((n) => <button key={n} aria-label={n}><Icon name={n} size={7} /></button>)}
          </PanelHead>
          <ToolRow>
            {rowOne.map(([n, w], i) => <ToolBtn key={i} $w={w} aria-label={n}><Icon name={n} size={n === "caret" ? 4 : 9} /></ToolBtn>)}
          </ToolRow>
          <ToolRow>
            {rowTwo.map(([n, w], i) => <ToolBtn key={i} $w={w} aria-label={n}><Icon name={n} size={n === "down" || n === "up" ? 7 : 9} /></ToolBtn>)}
            <ToolBtn $w={17} $on aria-label="display mode"><Icon name="boxed" size={9} /><Icon name="caret" size={4} /></ToolBtn>
            <ToolBtn $w={22} aria-label="sheet"><Icon name="sheet" size={9} /></ToolBtn>
            <ToolBtn aria-label="edit"><Icon name="edit" size={9} /></ToolBtn>
          </ToolRow>
          <TreeBox>
            <TreeRows role="tree">
              {tree.map((n, i) => (
                <TreeRow key={i} role="treeitem" aria-label={n.text}>
                  {n.g.split("").map((t, k) => (
                    <Guide key={k} $t={t}>{n.open && k === n.g.length - 1 && <Expander />}</Guide>
                  ))}
                  <NodeIcon><Icon name={n.icon} size={8} /></NodeIcon>
                  <NodeText $sel={n.sel}>{n.text}</NodeText>
                </TreeRow>
              ))}
            </TreeRows>
            <ScrollBar>
              <ScrollArrow aria-label="Scroll left">
                <svg width="4" height="5" viewBox="0 0 4 5"><path d="M4 0v5L0 2.500z" fill="#555" /></svg>
              </ScrollArrow>
              <ScrollTrack><ScrollThumb /></ScrollTrack>
              <ScrollArrow aria-label="Scroll right">
                <svg width="4" height="5" viewBox="0 0 4 5"><path d="M0 0v5l4-2.500z" fill="#555" /></svg>
              </ScrollArrow>
            </ScrollBar>
          </TreeBox>
          <BottomTabs>
            {["Solids", "Planes", "Levels", "Recent Functions"].map((t) => <BottomTab key={t}>{t}</BottomTab>)}
            <BottomTab $on>Toolpaths</BottomTab>
          </BottomTabs>
        </Side>

        <Work>
          <Canvas>
            <Drawing />
            <SelectionBar>
              <Icon name="dots" size={7} />
              <AutoCursor><Icon name="arrow" size={8} />AutoCursor</AutoCursor>
              {selTools.map((n, i) => <Icon key={i} name={n} size={n === "caret" ? 4 : 9} />)}
            </SelectionBar>
            <SideBar>
              {roundTools.map((n) => <RoundButton key={n} aria-label={n}><Icon name={n} size={9} /></RoundButton>)}
            </SideBar>
          </Canvas>
          <SheetRow>
            <SheetTab>Viewsheet-1</SheetTab>
            <AddSheet aria-label="Add viewsheet">+</AddSheet>
            <SheetArrows>
              <svg width="3" height="5" viewBox="0 0 4 5"><path d="M4 0v5L0 2.500z" fill="#999" /></svg>
              <svg width="3" height="5" viewBox="0 0 4 5"><path d="M0 0v5l4-2.500z" fill="#999" /></svg>
            </SheetArrows>
          </SheetRow>
        </Work>
      </Main>

      <StatusBar>
        <Stat $w={65}>SECTION VIEW: OFF</Stat>
        <Stat $w={93}>SELECTED ENTITIES: 0</Stat>
        <Stat $w={10}>X:</Stat>
        <Stat $w={40}>-211.90270</Stat>
        <Stat $w={9}>Y:</Stat>
        <Stat $w={37}>154.87166</Stat>
        <Stat $w={11}>Z:</Stat>
        <Stat $w={33}>0.00000</Stat>
        <Stat $w={16}>3D</Stat>
        <Stat $w={51}>CPLANE: Front</Stat>
        <Stat $w={51}>TPLANE: Front</Stat>
        <Stat $w={40}>WCS: Top</Stat>
        <StatIcons>
          {["globe", "globe", "globe", "ball", "ball", "ballHalf"].map((n, i) => <Icon key={i} name={n} size={10} />)}
        </StatIcons>
      </StatusBar>
    </Shell>
  );
}
